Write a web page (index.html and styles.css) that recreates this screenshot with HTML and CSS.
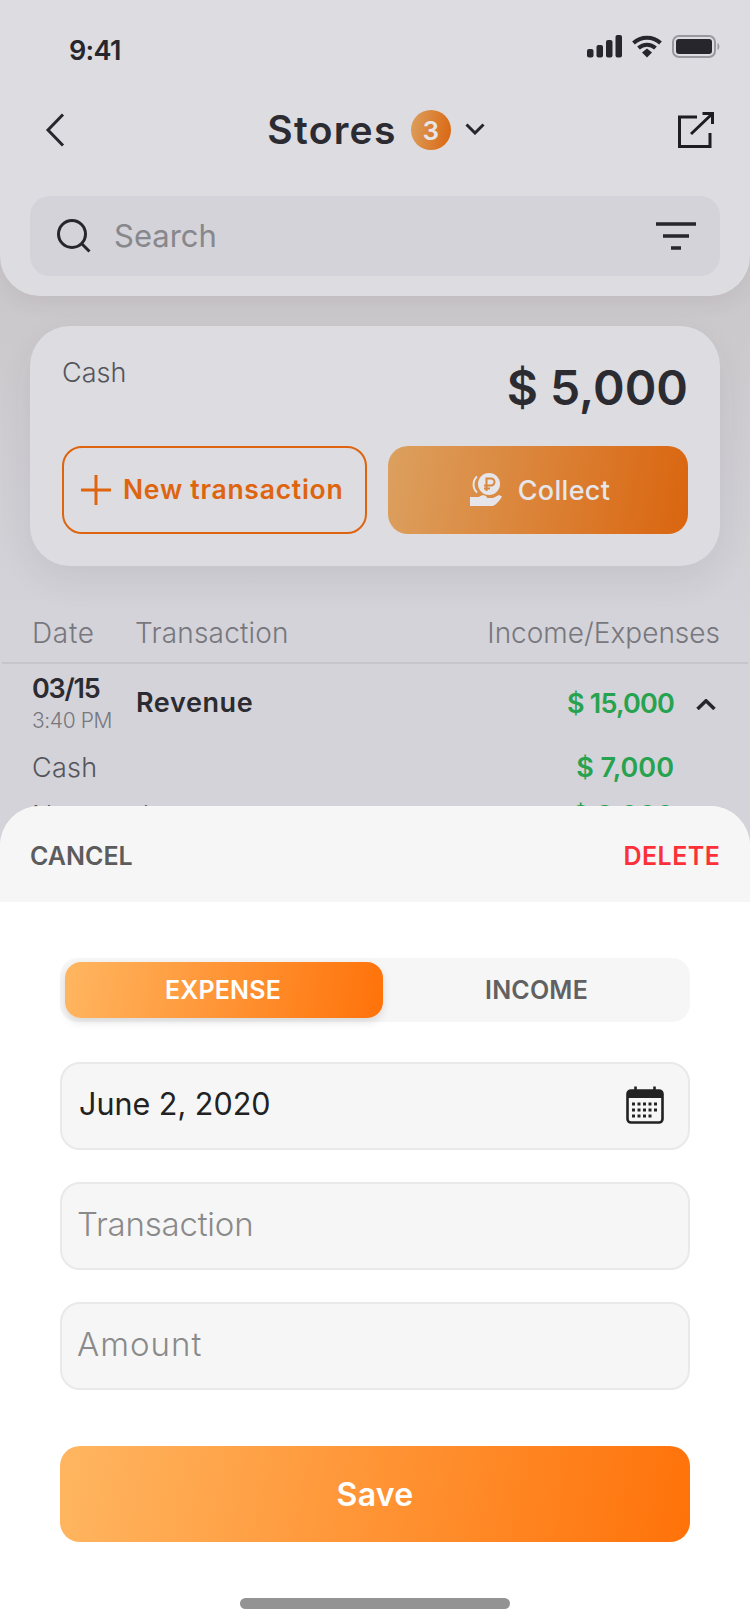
FILE: index.html
```html
<!DOCTYPE html>
<html lang="en">
<head>
<meta charset="utf-8">
<title>Stores</title>
<link rel="stylesheet" href="styles.css">
</head>
<body>
<div class="screen">
  <header class="top">
    <div class="status">
      <span class="time">9:41</span>
      <div class="status-icons">
        <svg class="ic-signal" width="35" height="23" viewBox="0 0 35 23"><rect x="0" y="14" width="6.500" height="8.500" rx="2"/><rect x="9.500" y="10" width="6.500" height="12.500" rx="2"/><rect x="19" y="5" width="6.500" height="17.500" rx="2"/><rect x="28.500" y="0" width="6.500" height="22.500" rx="2"/></svg>
        <svg class="ic-wifi" width="30" height="23" viewBox="0 0 30 23"><path d="M1.500 8C9 1 21 1 28.500 8" fill="none" stroke="#26262c" stroke-width="4"/><path d="M6.500 13C11.500 8.500 18.500 8.500 23.500 13" fill="none" stroke="#26262c" stroke-width="4"/><path d="M10 17.500L15 13.500L20 17.500L15 22.500Z" fill="#26262c"/></svg>
        <svg class="ic-battery" width="48" height="23" viewBox="0 0 48 23"><rect x="1" y="1" width="42" height="21" rx="6" fill="none" stroke="#98989e" stroke-width="2"/><rect x="4" y="4" width="36" height="15" rx="3" fill="#26262c"/><path d="M45.500 8C48 9 48 14 45.500 15Z" fill="#98989e"/></svg>
      </div>
    </div>
    <nav class="nav">
      <svg class="ic-back" width="22" height="36" viewBox="0 0 22 36"><path d="M18 2.500L3 18L18 33.500" fill="none" stroke="#26262c" stroke-width="3"/></svg>
      <div class="title-wrap">
        <span class="title">Stores</span>
        <span class="badge">3</span>
        <svg class="ic-down" width="20" height="12" viewBox="0 0 20 12"><path d="M1.500 1.500L10 10L18.500 1.500" fill="none" stroke="#26262c" stroke-width="3"/></svg>
      </div>
      <svg class="ic-share" width="36" height="36" viewBox="0 0 36 36"><path d="M19 5H1.500V34.500H32V21M13 22L34.500 1.500M24.500 1.500H34.500V12" fill="none" stroke="#1d1d22" stroke-width="3"/></svg>
    </nav>
    <div class="search">
      <svg class="ic-search" width="34" height="34" viewBox="0 0 34 34"><circle cx="15" cy="15" r="13.500" fill="none" stroke="#26262c" stroke-width="3"/><path d="M25 25L32.500 32.500" stroke="#26262c" stroke-width="3"/></svg>
      <span class="search-text">Search</span>
      <svg class="ic-filter" width="40" height="28" viewBox="0 0 40 28"><path d="M0 2H40M7 14H33M15 26H25" stroke="#26262c" stroke-width="3.500"/></svg>
    </div>
  </header>

  <section class="card">
    <div class="card-top">
      <span class="card-label">Cash</span>
      <span class="card-value">$ 5,000</span>
    </div>
    <div class="card-actions">
      <div class="btn-new">
        <svg width="30" height="30" viewBox="0 0 30 30"><path d="M15 0V30M0 15H30" stroke="#de640f" stroke-width="3"/></svg>
        <span>New transaction</span>
      </div>
      <div class="btn-collect">
        <svg class="ic-coin" width="34" height="34" viewBox="0 0 34 34"><path d="M8 3.500A11 11 0 0 0 8 19.500" fill="none" stroke="#e6e6ea" stroke-width="2"/><circle cx="20" cy="11" r="11" fill="#e6e6ea"/><path d="M17.500 18V5.500H22A3.500 3.500 0 0 1 22 12.500H15M15 15.500H21" fill="none" stroke="#d9883f" stroke-width="2"/><path d="M1 24H10C13 21 18 22 18 25H24L30 22L33 23.500C31 27 28 31 24 33H1Z" fill="#e6e6ea"/></svg>
        <span>Collect</span>
      </div>
    </div>
  </section>

  <section class="table">
    <div class="thead">
      <span class="th-date">Date</span>
      <span class="th-name">Transaction</span>
      <span class="th-amt">Income/Expenses</span>
    </div>
    <div class="row-main">
      <div class="col-date">
        <div class="date">03/15</div>
        <div class="clock">3:40 PM</div>
      </div>
      <span class="name">Revenue</span>
      <span class="amt amt-main">$ 15,000</span>
      <span class="trail"><svg width="20" height="11" viewBox="0 0 20 11"><path d="M1.500 10L10 1.800L18.500 10" fill="none" stroke="#26262c" stroke-width="3.500"/></svg></span>
    </div>
    <div class="row-sub">
      <span class="sub-label">Cash</span>
      <span class="amt">$ 7,000</span>
      <span class="trail"></span>
    </div>
    <div class="row-sub">
      <span class="sub-label">Non-cash</span>
      <span class="amt">$ 8,000</span>
      <span class="trail"></span>
    </div>
  </section>

  <section class="sheet">
    <div class="sheet-head">
      <span class="cancel">CANCEL</span>
      <span class="delete">DELETE</span>
    </div>
    <div class="sheet-body">
      <div class="segment">
        <div class="seg-active">EXPENSE</div>
        <div class="seg-idle">INCOME</div>
      </div>
      <div class="fields">
        <div class="field field-date">
          <span class="field-value">June 2, 2020</span>
          <svg class="ic-cal" width="38" height="38" viewBox="0 0 38 38"><rect x="1.500" y="4.500" width="35" height="32" rx="3.500" fill="none" stroke="#222" stroke-width="2.600"/><rect x="2" y="5" width="34" height="7" fill="#222"/><path d="M9.500 0.500V7M28.500 0.500V7" stroke="#222" stroke-width="2.600"/><path d="M6 18H33M6 24H33M6 30H26" stroke="#222" stroke-width="3" stroke-dasharray="3 2.500"/></svg>
        </div>
        <div class="field field-ph"><span class="field-value ph-name">Transaction</span></div>
        <div class="field field-ph"><span class="field-value ph-amount">Amount</span></div>
      </div>
      <div class="save">Save</div>
      <div class="home"></div>
    </div>
  </section>
</div>
</body>
</html>
```

FILE: styles.css
```css
* { box-sizing: border-box; }
html, body { margin: 0; padding: 0; }
body { font-family: Inter, "Liberation Sans", sans-serif; background: #d3d3d9; }
.screen { position: relative; width: 750px; height: 1624px; overflow: hidden; background: linear-gradient(#cbc8cb 296px, #d3d3d9 620px); }

.top { height: 296px; background: #dcdce1; border-radius: 0 0 40px 40px; padding: 0 30px; box-shadow: 0 6px 20px rgba(60,50,50,.08); }
.status { height: 100px; display: flex; align-items: center; justify-content: space-between; padding: 0 0 0 39px; }
.time { font-size: 27px; font-weight: 600; color: #26262c; letter-spacing: -0.7px; }
.status-icons { display: flex; align-items: center; gap: 10px; margin-top: -8px; }
.ic-signal { fill: #26262c; }
.nav { height: 60px; display: flex; align-items: center; justify-content: space-between; padding: 0 6px 0 15px; }
.title-wrap { display: flex; align-items: center; margin-left: 7px; margin-top: -2px; }
.title { font-size: 39px; font-weight: 600; color: #2b2b31; letter-spacing: 1.3px; }
.badge { width: 40px; height: 40px; border-radius: 50%; margin-left: 14px; margin-top: 2px; display: flex; align-items: center; justify-content: center; color: #e6e6ea; font-size: 26px; font-weight: 600; background: linear-gradient(100deg, #dca05f, #da650f); }
.ic-down { margin-left: 14px; }
.search { height: 80px; margin-top: 36px; border-radius: 20px; background: #d3d3d9; display: flex; align-items: center; padding: 0 24px 0 27px; }
.search-text { margin-left: 23px; font-size: 31px; color: #87878c; flex: 1; margin-top: -1px; }

.card { height: 240px; margin: 30px 30px 0; padding: 32px; border-radius: 40px; background: #dcdce1; box-shadow: 0 14px 34px rgba(50,50,60,.08); display: flex; flex-direction: column; }
.card-top { height: 88px; display: flex; justify-content: space-between; }
.card-label { font-size: 27px; line-height: 30px; color: #55555c; font-weight: 300; }
.card-value { font-size: 48px; line-height: 60px; font-weight: 600; color: #2b2b31; }
.card-actions { display: flex; gap: 21px; }
.btn-new { width: 305px; height: 88px; border: 2px solid #de640f; border-radius: 20px; display: flex; align-items: center; padding-left: 17px; gap: 12px; color: #de640f; font-size: 26.500px; font-weight: 600; letter-spacing: 0.750px; }
.btn-new span { margin-top: -2px; }
.btn-collect { width: 300px; height: 88px; border-radius: 20px; background: linear-gradient(100deg, #dca05f, #da650f); display: flex; align-items: center; justify-content: center; gap: 15px; color: #e6e6ea; font-size: 27px; font-weight: 500; letter-spacing: 0.3px; }
.ic-coin { margin-left: 3px; }

.table { margin-top: 37px; }
.thead { height: 61px; margin: 0 2px; border-bottom: 2px solid #c5c5cb; display: flex; align-items: center; padding: 0 28px 0 30px; font-size: 28px; font-weight: 300; color: #77777d; }
.th-date { width: 103px; letter-spacing: 0.7px; }
.th-name { letter-spacing: 0.2px; }
.th-amt { margin-left: auto; }
.row-main { display: flex; align-items: center; padding: 8px 30px 0 32px; }
.col-date { width: 104px; }
.date { font-size: 27px; line-height: 34px; font-weight: 600; color: #2b2b31; letter-spacing: -1.2px; }
.clock { font-size: 21px; line-height: 30px; font-weight: 300; color: #77777d; white-space: nowrap; letter-spacing: -0.4px; }
.name { font-size: 27px; font-weight: 600; color: #2b2b31; letter-spacing: 0.6px; margin-top: -3px; }
.amt { margin-left: auto; font-size: 27px; font-weight: 600; color: #27a24e; }
.amt-main { letter-spacing: -0.8px; margin-top: -2px; }
.trail { width: 46px; display: flex; justify-content: flex-end; padding-right: 4px; }
.row-sub { display: flex; align-items: center; height: 40px; padding: 0 30px 0 32px; margin-top: 8px; }
.row-main + .row-sub { margin-top: 11px; }
.sub-label { font-size: 27px; font-weight: 300; color: #55555c; letter-spacing: 0.3px; }

.sheet { position: absolute; left: 0; right: 0; bottom: 0; height: 818px; border-radius: 40px 40px 0 0; background: #fff; overflow: hidden; }
.sheet-head { height: 96px; background: #f6f6f6; display: flex; justify-content: space-between; align-items: center; padding: 4px 30px 0; font-size: 25px; font-weight: 600; }
.cancel { color: #5c5c5c; }
.delete { color: #fc3038; letter-spacing: 0.5px; margin-right: -0.5px; }
.sheet-body { padding: 56px 60px 0; }
.segment { height: 64px; border-radius: 18px; background: #f6f6f6; padding: 4px 0 4px 5px; display: flex; font-size: 25px; font-weight: 600; letter-spacing: 0.2px; }
.seg-active { width: 318px; border-radius: 16px; background: linear-gradient(100deg, #ffb661, #ff7209); color: #fff; display: flex; align-items: center; justify-content: center; padding-right: 2px; box-shadow: 0 4px 8px rgba(0,0,0,.12); }
.seg-idle { flex: 1; color: #616161; display: flex; align-items: center; justify-content: center; }
.fields { margin-top: 40px; display: flex; flex-direction: column; gap: 32px; }
.field { height: 88px; border-radius: 20px; border: 2px solid #e9e9e9; background: #f6f6f6; display: flex; align-items: center; padding: 0 24px 0 17px; font-size: 30.500px; }
.field-value { margin-top: -5px; }
.field-date { justify-content: space-between; color: #222; }
.ic-cal { margin-top: -2px; }
.field-ph { color: #8a8a8a; font-weight: 300; font-size: 33px; padding-left: 15px; }
.ph-name { letter-spacing: -0.2px; }
.ph-amount { letter-spacing: 1px; }
.save { margin-top: 56px; height: 96px; border-radius: 20px; background: linear-gradient(100deg, #ffb661, #ff7209); color: #fff; display: flex; align-items: center; justify-content: center; font-size: 32px; font-weight: 600; letter-spacing: 0.3px; }
.home { margin: 56px auto 0; width: 270px; height: 11px; border-radius: 6px; background: #939393; }
```
